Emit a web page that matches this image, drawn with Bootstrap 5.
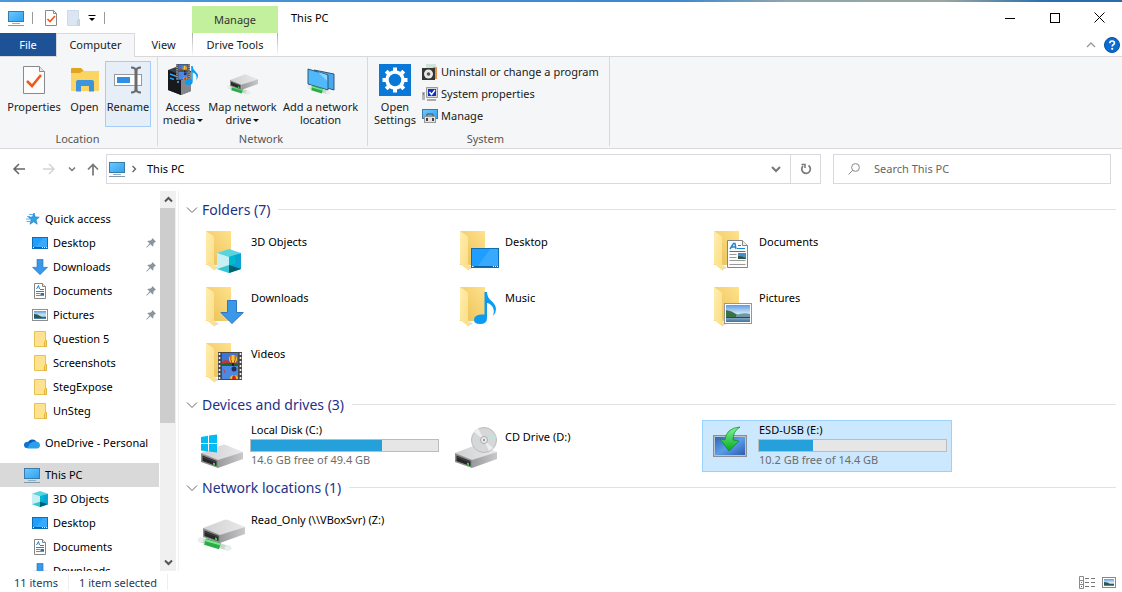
<!DOCTYPE html>
<html lang="en">
<head>
<meta charset="utf-8">
<meta name="viewport" content="width=device-width, initial-scale=1">
<title>This PC</title>
<link href="https://cdn.jsdelivr.net/npm/bootstrap@5.3.0/dist/css/bootstrap.min.css" rel="stylesheet">
<style>
:root{--line:#d9d9db;--ink:#1a1a1a}
body{font-family:"Noto Sans","Open Sans",sans-serif;font-size:11px;line-height:16px;color:#000;background:#fff}
svg{display:block;flex:none}
.btn{--bs-btn-font-size:11px;--bs-btn-line-height:16px;--bs-btn-border-radius:0;--bs-btn-border-width:0;--bs-btn-padding-x:0;--bs-btn-padding-y:0;--bs-btn-color:#000}
.desk-strip{height:2px;background:linear-gradient(90deg,#4a98dc,#3a88d0 60%,#8fa5ac 70%,#9aa79f 84%,#2c6fae 93%,#2a6cab)}
.title-row{height:31px}
.quick-bar{width:192px;padding:0 0 0 8px;gap:8px}
.quick-bar .sep{width:1px;height:12px;background:#999}
.quick-bar .sep-wide{margin-right:4px}
.ctx-head{width:86px;height:27px;background:#c3f09c;color:#333;line-height:28px}
.win-title{padding-left:13px}
.win-btn{width:45px}
.tab-row{height:24px;border-bottom:1px solid var(--line)}
.tab-row .nav-link{padding:0;line-height:24px;text-align:center;color:var(--ink);border-radius:0}
.tab-file{width:56px;height:23px;background:#1e5297;color:#fff!important}
.tab-computer{width:79px;height:24px;background:#f5f6f8;border:1px solid var(--line);border-bottom:0;line-height:22px!important}
.tab-view{width:57px}
.tab-drive{width:86px;border:solid;border-width:0 1px;border-image:linear-gradient(#aaa,#fff) 1}
.tab-tools{padding-right:2px}
.ribbon{background:#f5f6f8;border-bottom:1px solid var(--line);padding-bottom:2px}
.ribbon-group{padding:4px 5px 0 2px;border-right:1px solid var(--line)}
.ribbon-group:first-child{padding:4px 6px 0 4px}
.ribbon-group:last-child{padding:4px 10px 0 4px}
.group-name{color:#555;text-align:center;line-height:14px;margin-top:5px}
.big-btn{--bs-btn-border-width:1px;width:46px;height:66px;padding-top:2px;line-height:13px;display:flex;flex-direction:column;align-items:center;gap:4px;color:var(--ink);white-space:nowrap}
.big-btn.wide{width:73px}.big-btn.wider{width:83px}.big-btn.open{width:41px}.big-btn.prop{width:60px}
.big-btn.hot{background:#e6eef8;border-color:#a3ccf8}
.small-btn{height:22px;display:flex;align-items:center;gap:3px;color:var(--ink);white-space:nowrap}
.caret{display:inline-block;border:3px solid transparent;border-top-color:#111;border-bottom:0;vertical-align:2px;margin-left:2px}
.address-row{padding:5px 11px 7px 10px}
.nav-arrows{width:96px;gap:10px}
.field-box{height:30px;border:1px solid var(--line)}
.crumbs{padding-left:2px;gap:4px}
.reload-btn{width:30px;height:28px;border-left:1px solid var(--line)!important}
.search-box{width:278px;margin-left:12px;padding-left:14px;gap:14px}
.search-box input{border:0;padding:0;font-size:11px;line-height:16px;outline:0;background:none;min-height:0;color:#555}
.search-box input::placeholder{color:#666;opacity:1}
.side{width:159px;overflow:hidden;padding-top:16px}
.side .nav-link{height:24px;padding:0 3px 0 32px;gap:5px;color:#000;flex:none}
.side .nav-link.top{padding-left:24px}
.side .nav-link.current{background:#d9d9d9}
.side .gap-above{margin-top:8px}
.side .nav{flex-wrap:nowrap}
.scroll-track{width:16px;margin-left:1px;background:#f0f0f0}
.scroll-track button{height:17px}
.scroll-thumb{flex:0 0 59%;width:15px;background:#cdcdcd;max-height:215px}
.content-pane{margin-left:2px;border-left:1px solid #f0f0f0;padding:3px 6px 0 7px;overflow:hidden}
.section-head{height:31px;font-size:14px;line-height:18px;color:#1e3287;gap:4px}
.section-head::after{content:"";flex:1;height:1px;background:#e2e2e2;margin-left:4px}
.tile-grid{display:grid;grid-template-columns:repeat(auto-fill,250px);gap:4px;padding-left:8px}
.tile{height:52px;border:1px solid transparent;padding:1px 4px 0 3px;gap:4px;color:#000;text-decoration:none;text-align:left}
.tile.picked{background:#cce8ff;border-color:#99d1ff}
.tile-one{align-items:flex-start}
.tile-one .tile-name{margin-top:7px}
.tile-name{padding-left:1px}
.tile .progress{height:13px;margin-top:1px;--bs-progress-bg:#e6e6e6;--bs-progress-border-radius:0;--bs-progress-bar-bg:#26a0da;border:1px solid #bcbcbc}
.tile-free{color:#6d6d6d;padding-left:1px}
.status-bar{height:21px;color:#1e395b;padding:3px 6px 0 14px}
.status-bar .cell{padding:1px 10px 0 0;margin-right:10px;border-right:1px solid #eee;height:16px}
.view-btns{gap:7px}
</style>
</head>
<body>
<svg width="0" height="0" class="position-absolute" aria-hidden="true">
<defs>
<linearGradient id="gScreen" x1="0" y1="0" x2="1" y2="1"><stop offset="0" stop-color="#6cc9ff"/><stop offset="1" stop-color="#2fa0f0"/></linearGradient>
<linearGradient id="gFlap" x1="0" y1="0" x2="1" y2="1"><stop offset="0" stop-color="#ffeeb0"/><stop offset="1" stop-color="#fbdc80"/></linearGradient>
<linearGradient id="gBack" x1="0" y1="1" x2="1" y2="0"><stop offset="0" stop-color="#e9bf55"/><stop offset="1" stop-color="#ffe28c"/></linearGradient>
<linearGradient id="gTop" x1="0" y1="0" x2="1" y2="0"><stop offset="0" stop-color="#cfd0d3"/><stop offset="1" stop-color="#e9e9ea"/></linearGradient>
<linearGradient id="gSide" x1="0" y1="0" x2="1" y2="0"><stop offset="0" stop-color="#9a9a9c"/><stop offset="1" stop-color="#c9c9cb"/></linearGradient>
<linearGradient id="gSky" x1="0" y1="0" x2="0" y2="1"><stop offset="0" stop-color="#5e9be6"/><stop offset=".5" stop-color="#cfe6f5"/><stop offset="1" stop-color="#3d7199"/></linearGradient>
<linearGradient id="gUsb" x1="0" y1="0" x2="1" y2="1"><stop offset="0" stop-color="#2c62b8"/><stop offset=".5" stop-color="#5b9de8"/><stop offset="1" stop-color="#2a5ab0"/></linearGradient>
<linearGradient id="gLeaf" x1="0" y1="0" x2="0" y2="1"><stop offset="0" stop-color="#7df59a"/><stop offset="1" stop-color="#06a81c"/></linearGradient>
<symbol id="pc" viewBox="0 0 16 16"><rect x=".5" y="1.500" width="15" height="10" fill="url(#gScreen)" stroke="#3a7ca8"/><path d="M4 13h8v1H4z" fill="#8fb0c4"/><path d="M0 15h16v1H0z" fill="#7f9bb0"/></symbol>
<symbol id="desk" viewBox="0 0 28 20"><rect x=".5" y=".5" width="27" height="19" fill="#1e9fff" stroke="#0f6db4"/><path d="M19 1h8v17H7z" fill="#50b3ff" opacity=".5"/><path d="M1 18h26v1H1z" fill="#0b63a8"/><path d="M1 18h1.500v1H1zM22 18h1v1h-1zM24 18h1v1h-1zM26 18h1v1h-1z" fill="#fff"/></symbol>
<symbol id="desk16" viewBox="0 0 16 16"><rect x=".5" y="2.500" width="15" height="11" fill="#1e9fff" stroke="#0f6db4"/><path d="M11 3h4v9H4z" fill="#50b3ff" opacity=".5"/><path d="M1 12h14v1H1z" fill="#0b63a8"/><path d="M1 12h1v1H1zM10 12h1v1h-1zM12 12h1v1h-1zM14 12h1v1h-1z" fill="#fff"/></symbol>
<symbol id="down" viewBox="0 0 24 24"><path d="M7.500.5h9v12h6.800L12 23.500.8 12.500h6.700z" fill="#3b97e8" stroke="#2a78c4"/></symbol>
<symbol id="cube" viewBox="0 0 24 24"><path d="M0 4 12 0l12 4-12 5z" fill="#59d3e0"/><path d="M0 4l12 4v16L0 20z" fill="#c6f0f4"/><path d="M24 4 12 8v16l12-4z" fill="#09a3d5"/><path d="M12 8l6-2v8l-6 3z" fill="#00b9cf"/><path d="M0 20l12-4v8z" fill="#35c6d3"/><path d="M24 20l-12-4v8z" fill="#00616f"/></symbol>
<symbol id="doc" viewBox="0 0 21 28"><path d="M.5.5h15l5 5v22H.5z" fill="#fcfcfc" stroke="#858585"/><path d="M15.500.5v5h5" fill="#eee" stroke="#858585"/><path d="M3 9 6.500 3.500H8L9 9M4.500 7H8" fill="none" stroke="#1a86d0" stroke-width="1.400"/><path d="M11 5.500h3M10 8.500h8M2.500 11.500h16" stroke="#1a86d0" stroke-width="1.200"/><path d="M2.500 14.500h7M2.500 17.500h7M2.500 20.500h16M2.500 24.500h16" stroke="#9a9a9a"/><path d="M11 13h8v6h-8z" fill="#4d8ccb"/><path d="M11 16q4 0 8 2v1h-8z" fill="#2d5540"/></symbol>
<symbol id="doc16" viewBox="0 0 16 16"><path d="M2.500.5h8l3 3v12h-11z" fill="#fff" stroke="#868686"/><path d="M10.500.5v3h3" fill="#eee" stroke="#868686"/><path d="M4.500 6 6.500 2.500 7.500 6" fill="none" stroke="#1a86d0"/><path d="M8 6.500h4M4 8.500h8" stroke="#1a86d0"/><path d="M4 10.500h4M4 12.500h8" stroke="#888"/><path d="M8.500 10h3.500v2H8.500z" fill="#356f95"/></symbol>
<symbol id="pic" viewBox="0 0 28 21"><rect x=".5" y=".5" width="27" height="20" fill="#fff" stroke="#969696"/><path d="M2 2h24v17H2z" fill="url(#gSky)"/><path d="M2 7q6 1 10 4t7 3H2z" fill="#3c7046"/><path d="M12 12q8-3 14-1v3H12z" fill="#7198a0"/><path d="M2 14h24v1H2z" fill="#28485a"/></symbol>
<symbol id="pic16" viewBox="0 0 16 16"><rect x=".5" y="2.500" width="15" height="11" fill="#fff" stroke="#8e8e8e"/><path d="M2 4h12v8H2z" fill="url(#gSky)"/><path d="M2 7q4 0 6 2t6 1v1H2z" fill="#2a5950"/></symbol>
<symbol id="fold16" viewBox="0 0 16 16"><path d="M2.500.5h11v9h1v6h-12z" fill="#ffe28f" stroke="#e8c353"/><path d="M12.500 15.500v-5l1-1h1v6z" fill="#fbd767" stroke="#dfb53f"/></symbol>
<symbol id="star" viewBox="0 0 16 16"><path d="M10 2 11.200 6l4 .2-3.200 2.600 1.200 4.400-3.500-2.500-3.700 2.500 1.200-4.400L4.500 6.200 8.500 6z" fill="#2da2ea" stroke="#1f7fc2" stroke-width=".7"/><path d="M5 3.500h4M3 5.500h3M2 8h4M2.500 10.500h4" stroke="#57b6f0"/></symbol>
<symbol id="cloud" viewBox="0 0 16 16"><path d="M3.500 8a5 4.700 0 0 1 9-1.500L9 10z" fill="#0a5cb3"/><path d="M0 10.500a3.300 3.300 0 0 1 5-3.300l8.500 5.800H3a2.800 2.800 0 0 1-3-2.500z" fill="#1173cf"/><path d="M6 8.500q3-3 6.500-2 3.500.8 3.500 3.800T13 13.500H3z" fill="#2aa0ec"/></symbol>
<symbol id="pin" viewBox="0 0 11 11"><path d="M7 0 11 4 9.600 4.600 8.200 6.200 7.800 9.500 4.900 6.900 1 10.500 0 10.500 4 6 1.200 3.400 5 2.800 6.600 1.300z" fill="#89949c"/></symbol>
<symbol id="folder" viewBox="0 0 48 48"><path d="M8 4h25v34H8z" fill="url(#gBack)"/><path d="M16 43l5-2-4-3z" fill="#ddd"/><path d="M8 4l6 4q2 1 2 3v23l1 9q0 1-1 0l-8-6z" fill="url(#gFlap)"/></symbol>
<symbol id="drive" viewBox="0 0 44 24"><path d="M1 9 22 1q2-1 4 0l17 7-25 9z" fill="url(#gTop)"/><path d="M18 16l25-8v7L18 24z" fill="url(#gSide)"/><path d="M1 9l17 7v8L1 18z" fill="#8d8d8f"/><path d="M2.500 11.500 16.500 17v5L2.500 17z" fill="#272727"/><path d="M3 13l13 5" stroke="#555" stroke-width=".7"/><path d="M13 18.500l2 .8v2l-2-.8z" fill="#35e04a"/></symbol>
<symbol id="tube" viewBox="0 0 34 16"><path d="M3 5l3 1M23 11l6 2" stroke="#c9d6cd" stroke-width="5" stroke-linecap="round"/><path d="M2 5h1M29 13h2" stroke="#e8eeea" stroke-width="5" stroke-linecap="round"/><path d="M7 6.500 22 11" stroke="#29ad46" stroke-width="7"/><path d="M7 5 23 9.500" stroke="#7fe491" stroke-width="2"/></symbol>
<symbol id="film" viewBox="0 0 24 28"><path d="M0 0h24v28H0z" fill="#4a4a4a"/><path d="M4 1h16v12H4z" fill="#3e74d6"/><path d="M4 14h16v13H4z" fill="#4b8ae2"/><path d="M4 10q4-4 8 0t8-1v4H4z" fill="#c0382e"/><path d="M4 12q8-2 16 0v1H4z" fill="#1c6331"/><circle cx="15" cy="7" r="4" fill="#f0ca2a"/><path d="M13 3.500q-1 4 1 7.500M17 3.500q1 4-1 7.500" stroke="#d02a2a" fill="none"/><path d="M15 11v3" stroke="#222" stroke-width="2"/><circle cx="16" cy="17" r="2.500" fill="#2a2a55"/><path d="M12 27a4 4 0 0 1 8 0z" fill="#f0b629"/><path d="M14 27q0-3 2-4 2 1 2 4" fill="#c22"/><path d="M5 17q2 1 2 4" stroke="#c73a58" fill="none"/><path d="M1.500 1v26M22.500 1v26" stroke="#f0f0f0" stroke-width="1.600" stroke-dasharray="2 2"/></symbol>
<symbol id="note" viewBox="0 0 22 32"><path d="M10.500 0H13q0 5 4 8.500 5 4.500 5 8.500 0 4-3 7 2-6-1-10-2.500-3-5-3v15q0 6-7 6-6 0-6-4 0-5 7-5.500h3.500z" fill="#0c9bf3"/></symbol>
<symbol id="check" viewBox="0 0 22 28"><path d="M.5.5h16l5 5v22H.5z" fill="#fcfcfc" stroke="#8a8a8a"/><path d="M16.500.5v5h5" fill="#e6e6e6" stroke="#8a8a8a"/><path d="M4 15l5 5 9-11" fill="none" stroke="#f1581b" stroke-width="2.600"/></symbol>
<symbol id="chev" viewBox="0 0 12 12"><path d="M1 3.500 6 8.500l5-5" fill="none" stroke="currentColor"/></symbol>
</defs>
</svg>

<div class="d-flex flex-column vh-100 overflow-hidden">
<div class="desk-strip flex-shrink-0"></div>
<header class="flex-shrink-0">
  <div class="title-row d-flex">
    <div class="quick-bar d-flex align-items-center">
      <svg width="16" height="16"><use href="#pc"/></svg>
      <span class="sep sep-wide"></span>
      <button class="btn" aria-label="Properties"><svg width="12" height="16" viewBox="0 0 12 16"><path d="M.5.5h8l3 3v12H.5z" fill="#fff" stroke="#8a8a8a"/><path d="M8.500.5v3h3" fill="none" stroke="#8a8a8a"/><path d="M2.500 9 5 11.500 10 6" fill="none" stroke="#f1581b" stroke-width="1.700"/></svg></button>
      <button class="btn" aria-label="New folder"><svg width="15" height="16" viewBox="-2 0 15 16"><path d="M.5.5h11v9h1v6H.5z" fill="#dce6f3" stroke="#cddaea"/><path d="M10.500 15.500v-5l2-1v6z" fill="#d3dfee" stroke="#bfcfe3"/></svg></button>
      <button class="btn" aria-label="Customize toolbar"><svg width="8" height="8" viewBox="0 0 8 8"><path d="M.5 1.500h7" stroke="#000"/><path d="M1 4h6L4 7z"/></svg></button>
      <span class="sep"></span>
    </div>
    <div class="ctx-head align-self-end text-center">Manage</div>
    <div class="win-title flex-grow-1 align-self-center">This PC</div>
    <button class="btn win-btn d-flex align-items-center justify-content-center" aria-label="Minimize"><svg width="10" height="10"><path d="M0 5.500h10" stroke="#000"/></svg></button>
    <button class="btn win-btn d-flex align-items-center justify-content-center" aria-label="Maximize"><svg width="10" height="10"><rect x=".5" y=".5" width="9" height="9" fill="none" stroke="#000"/></svg></button>
    <button class="btn win-btn d-flex align-items-center justify-content-center" aria-label="Close"><svg width="11" height="11"><path d="M.5.5l10 10M10.500.5l-10 10" stroke="#000"/></svg></button>
  </div>
  <nav class="tab-row d-flex">
    <a href="#" class="nav-link tab-file">File</a>
    <a href="#" class="nav-link tab-computer">Computer</a>
    <a href="#" class="nav-link tab-view">View</a>
    <a href="#" class="nav-link tab-drive">Drive Tools</a>
    <div class="tab-tools ms-auto d-flex align-items-center gap-2">
      <button class="btn" aria-label="Collapse ribbon"><svg width="10" height="10" viewBox="0 0 10 10"><path d="M1 7l4-4 4 4" fill="none" stroke="#999" stroke-width="1.300"/></svg></button>
      <button class="btn" aria-label="Help"><svg width="16" height="16" viewBox="0 0 16 16"><circle cx="8" cy="8" r="7.500" fill="#0a6cd0" stroke="#0b4f9b"/><path d="M5.800 6.200q0-2.200 2.300-2.200t2.300 1.900q0 1.200-1.200 1.900-1 .6-1 1.700" fill="none" stroke="#fff" stroke-width="1.700"/><circle cx="8.200" cy="11.800" r="1.100" fill="#fff"/></svg></button>
    </div>
  </nav>
  <div class="ribbon d-flex">
    <section class="ribbon-group">
      <div class="d-flex">
        <button class="btn big-btn prop"><svg width="32" height="32" viewBox="0 0 32 32"><use href="#check" x="5" y="2" width="22" height="28"/></svg>Properties</button>
        <button class="btn big-btn open"><svg width="32" height="32" viewBox="0 0 32 32"><path d="M2 5q0-1 1-1h9l3 3h14q1 0 1 1v18H2z" fill="#e0a422"/><path d="M2 9h9l3-2h15q1 0 1 1v18q0 1-1 1H3q-1 0-1-1z" fill="#fcd462"/><path d="M7 27.500V18q0-2 2-2h14q2 0 2 2v9.500h-5V22h-8v5.500z" fill="#3b94dc"/></svg>Open</button>
        <button class="btn big-btn hot"><svg width="32" height="32" viewBox="0 0 32 32"><rect x="2.500" y="10.500" width="27" height="11" fill="#fff" stroke="#9a9a9a"/><path d="M5 13h13v6H5z" fill="#2d8fe5"/><path d="M19 3.500q5 0 5 4v17q0 4-5 4M29 3.500q-5 0-5 4v17q0 4 5 4" fill="none" stroke="#6b6b6b" stroke-width="2"/><path d="M24 6v20" stroke="#6b6b6b" stroke-width="3"/></svg>Rename</button>
      </div>
      <div class="group-name">Location</div>
    </section>
    <section class="ribbon-group">
      <div class="d-flex">
        <button class="btn big-btn"><svg width="32" height="32" viewBox="0 0 32 32"><path d="M1 6 9 3l15 4v20l-10 4L1 26z" fill="#3b3e42"/><path d="M14 12l10-4v19l-10 4z" fill="#85878b"/><path d="M1 6l13 5v20L1 26z" fill="#17191c"/><path d="M3 10l8 3M3 14l4 1.500" stroke="#2fa3f0" stroke-width="1.500"/><circle cx="11" cy="18" r="1" fill="#4db5ff"/><use href="#film" x="9" y="0" width="14" height="16"/><use href="#note" x="18" y="0" width="13" height="23"/></svg><span>Access<br>media<i class="caret"></i></span></button>
        <button class="btn big-btn wide"><svg width="32" height="32" viewBox="0 0 32 32"><use href="#tube" x="0" y="19" width="24" height="12"/><use href="#drive" x="2" y="10" width="30" height="16"/></svg><span>Map network<br>drive<i class="caret"></i></span></button>
        <button class="btn big-btn wider"><svg width="32" height="32" viewBox="0 0 32 32"><path d="M9 6l20 4v16L9 20z" fill="#49a9ef" stroke="#31587a"/><path d="M3 5l20 6v15L3 20z" fill="#50b9fb" stroke="#31587a"/><path d="M13 8l9 3v6z" fill="#8ad4ff"/><use href="#tube" x="2" y="19" width="24" height="12"/></svg><span>Add a network<br>location</span></button>
      </div>
      <div class="group-name">Network</div>
    </section>
    <section class="ribbon-group">
      <div class="d-flex">
        <button class="btn big-btn"><svg width="32" height="32" viewBox="0 0 32 32"><path d="M0 0h32v32H0z" fill="#0a78d7"/><circle cx="16" cy="16" r="8" fill="none" stroke="#fff" stroke-width="3.500"/><g stroke="#fff" stroke-width="4"><path d="M16 3.500v4M16 24.500v4M3.500 16h4M24.500 16h4M7.200 7.200l2.800 2.800M22 22l2.800 2.800M7.200 24.800 10 22M22 10l2.800-2.800"/></g></svg><span>Open<br>Settings</span></button>
        <div class="ps-1">
          <button class="btn small-btn"><svg width="16" height="16" viewBox="0 0 16 16"><path d="M4 0h10v6H4z" fill="#cfe3d9"/><path d="M11 3h4v12h-4z" fill="#e8954b"/><path d="M0 4h13v12H0z" fill="#353535"/><circle cx="6.500" cy="10" r="4.500" fill="#e9e9e9"/><circle cx="6.500" cy="10" r="1.800" fill="#555"/></svg>Uninstall or change a program</button>
          <button class="btn small-btn"><svg width="16" height="16" viewBox="0 0 16 16"><path d="M4.500 1.500h11v10h-11z" fill="#d8d8d8" stroke="#999"/><path d="M6 3h8v7H6z" fill="#1230c0"/><path d="M7.500 6 9.500 8.500 13 4" fill="none" stroke="#fff" stroke-width="1.400"/><path d="M0 6h3v8H0z" fill="#b5b5b5"/><path d="M1 7h1v2H1z" fill="#27b32e"/><path d="M5 13h9v2H5z" fill="#aaa"/></svg>System properties</button>
          <button class="btn small-btn"><svg width="16" height="16" viewBox="0 0 16 16"><rect x=".5" y="1.500" width="15" height="9" fill="url(#gScreen)" stroke="#3a7ca8"/><path d="M5 8V6h6v2" fill="none" stroke="#555"/><rect x="2.500" y="8.500" width="11" height="6" fill="#e3e3e3" stroke="#999"/><path d="M4 10h2v3H4zM10 10h2v3h-2z" fill="#444"/></svg>Manage</button>
        </div>
      </div>
      <div class="group-name">System</div>
    </section>
  </div>
</header>

<div class="address-row d-flex align-items-center flex-shrink-0">
  <div class="nav-arrows d-flex align-items-center flex-shrink-0">
    <button class="btn" aria-label="Back"><svg width="18" height="14" viewBox="0 0 18 14"><path d="M15 7H4M9 2 4 7l5 5" fill="none" stroke="#666" stroke-width="1.500"/></svg></button>
    <button class="btn" aria-label="Forward"><svg width="20" height="14" viewBox="0 0 20 14"><path d="M5 7h11M11 2l5 5-5 5" fill="none" stroke="#d4d4d4" stroke-width="1.500"/></svg></button>
    <button class="btn" aria-label="Recent"><svg width="8" height="8" viewBox="0 0 8 8"><path d="M1 2.500l3 3 3-3" fill="none" stroke="#777" stroke-width="1.500"/></svg></button>
    <button class="btn" aria-label="Up"><svg width="14" height="14" viewBox="0 0 14 14"><path d="M7 13.500V3M2 7.500l5-5 5 5" fill="none" stroke="#777" stroke-width="1.700"/></svg></button>
  </div>
  <div class="field-box crumbs d-flex align-items-center flex-grow-1">
    <svg width="16" height="16"><use href="#pc"/></svg>
    <svg width="10" height="10" viewBox="0 0 10 10"><path d="M3.500 2 6.500 5l-3 3" fill="none" stroke="#666" stroke-width="1.400"/></svg>
    <span class="ps-1 flex-grow-1">This PC</span>
    <button class="btn me-1" aria-label="Previous locations"><svg width="12" height="10" viewBox="0 0 12 10"><path d="M2 3l4 4 4-4" fill="none" stroke="#777" stroke-width="2"/></svg></button>
    <button class="btn reload-btn d-flex align-items-center justify-content-center" aria-label="Refresh"><svg width="12" height="12" viewBox="0 0 12 12"><path d="M8.500 2.500A4.300 4.300 0 1 1 3 3" fill="none" stroke="#777" stroke-width="1.700"/><path d="M1.500 1.500H5V5" fill="none" stroke="#777" stroke-width="1.500"/></svg></button>
  </div>
  <label class="field-box search-box d-flex align-items-center flex-shrink-0">
    <svg width="12" height="12" viewBox="0 0 12 12"><circle cx="7.500" cy="4.500" r="3.900" fill="none" stroke="#888"/><path d="M4.700 7.300.5 11.500" stroke="#888"/></svg>
    <input class="form-control" type="text" placeholder="Search This PC" aria-label="Search This PC">
  </label>
</div>

<div class="d-flex flex-grow-1 overflow-hidden">
  <aside class="side flex-shrink-0">
    <nav class="nav flex-column">
      <a href="#" class="nav-link top d-flex align-items-center"><svg width="16" height="16"><use href="#star"/></svg>Quick access</a>
      <a href="#" class="nav-link d-flex align-items-center"><svg width="16" height="16"><use href="#desk16"/></svg>Desktop<svg class="ms-auto" width="10" height="10"><use href="#pin"/></svg></a>
      <a href="#" class="nav-link d-flex align-items-center"><svg width="16" height="16"><use href="#down"/></svg>Downloads<svg class="ms-auto" width="10" height="10"><use href="#pin"/></svg></a>
      <a href="#" class="nav-link d-flex align-items-center"><svg width="16" height="16"><use href="#doc16"/></svg>Documents<svg class="ms-auto" width="10" height="10"><use href="#pin"/></svg></a>
      <a href="#" class="nav-link d-flex align-items-center"><svg width="16" height="16"><use href="#pic16"/></svg>Pictures<svg class="ms-auto" width="10" height="10"><use href="#pin"/></svg></a>
      <a href="#" class="nav-link d-flex align-items-center"><svg width="16" height="16"><use href="#fold16"/></svg>Question 5</a>
      <a href="#" class="nav-link d-flex align-items-center"><svg width="16" height="16"><use href="#fold16"/></svg>Screenshots</a>
      <a href="#" class="nav-link d-flex align-items-center"><svg width="16" height="16"><use href="#fold16"/></svg>StegExpose</a>
      <a href="#" class="nav-link d-flex align-items-center"><svg width="16" height="16"><use href="#fold16"/></svg>UnSteg</a>
      <a href="#" class="nav-link top gap-above d-flex align-items-center text-nowrap"><svg width="16" height="16"><use href="#cloud"/></svg>OneDrive - Personal</a>
      <a href="#" class="nav-link top gap-above current d-flex align-items-center"><svg width="16" height="16"><use href="#pc"/></svg>This PC</a>
      <a href="#" class="nav-link d-flex align-items-center"><svg width="16" height="16"><use href="#cube"/></svg>3D Objects</a>
      <a href="#" class="nav-link d-flex align-items-center"><svg width="16" height="16"><use href="#desk16"/></svg>Desktop</a>
      <a href="#" class="nav-link d-flex align-items-center"><svg width="16" height="16"><use href="#doc16"/></svg>Documents</a>
      <a href="#" class="nav-link d-flex align-items-center"><svg width="16" height="16"><use href="#down"/></svg>Downloads</a>
    </nav>
  </aside>
  <div class="scroll-track d-flex flex-column flex-shrink-0">
    <button class="btn d-flex align-items-center justify-content-center" aria-label="Scroll up"><svg width="9" height="9" viewBox="0 0 9 9"><path d="M1 6.500l3.500-3.500L8 6.500" fill="none" stroke="#555" stroke-width="2"/></svg></button>
    <div class="scroll-thumb"></div>
    <button class="btn d-flex align-items-center justify-content-center mt-auto" aria-label="Scroll down"><svg width="9" height="9" viewBox="0 0 9 9"><path d="M1 2.500 4.500 6 8 2.500" fill="none" stroke="#555" stroke-width="2"/></svg></button>
  </div>
  <main class="content-pane flex-grow-1">
    <h2 class="section-head d-flex align-items-center m-0 fw-normal"><svg width="12" height="12" color="#666"><use href="#chev"/></svg>Folders (7)</h2>
    <div class="tile-grid">
      <a href="#" class="tile tile-one d-flex"><svg width="48" height="48" viewBox="0 0 48 48"><use href="#folder"/><use href="#cube" x="19" y="22" width="24" height="24"/></svg><span class="tile-name">3D Objects</span></a>
      <a href="#" class="tile tile-one d-flex"><svg width="48" height="48" viewBox="0 0 48 48"><use href="#folder"/><use href="#desk" x="19" y="21" width="28" height="20"/></svg><span class="tile-name">Desktop</span></a>
      <a href="#" class="tile tile-one d-flex"><svg width="48" height="48" viewBox="0 0 48 48"><use href="#folder"/><use href="#doc" x="21" y="13" width="21" height="28"/></svg><span class="tile-name">Documents</span></a>
      <a href="#" class="tile tile-one d-flex"><svg width="48" height="48" viewBox="0 0 48 48"><use href="#folder"/><use href="#down" x="22" y="17" width="24" height="24"/></svg><span class="tile-name">Downloads</span></a>
      <a href="#" class="tile tile-one d-flex"><svg width="48" height="48" viewBox="0 0 48 48"><use href="#folder"/><use href="#note" x="22" y="9" width="22" height="32"/></svg><span class="tile-name">Music</span></a>
      <a href="#" class="tile tile-one d-flex"><svg width="48" height="48" viewBox="0 0 48 48"><use href="#folder"/><use href="#pic" x="18" y="20" width="28" height="21"/></svg><span class="tile-name">Pictures</span></a>
      <a href="#" class="tile tile-one d-flex"><svg width="48" height="48" viewBox="0 0 48 48"><use href="#folder"/><use href="#film" x="20" y="13" width="24" height="28"/></svg><span class="tile-name">Videos</span></a>
    </div>
    <h2 class="section-head d-flex align-items-center m-0 fw-normal"><svg width="12" height="12" color="#666"><use href="#chev"/></svg>Devices and drives (3)</h2>
    <div class="tile-grid">
      <a href="#" class="tile d-flex"><svg width="48" height="48" viewBox="0 0 48 48"><use href="#drive" x="2" y="22" width="44" height="24"/><path d="M3 15l7-1.200V21H3zM11 13.600 19 12.500V21h-8zM3 22h7v7.500l-7-1zM11 22h8v8.500l-8-1z" fill="#00bcf2"/></svg>
        <div class="flex-grow-1"><div class="tile-name">Local Disk (C:)</div><div class="progress"><div class="progress-bar" style="width:70%"></div></div><div class="tile-free">14.6 GB free of 49.4 GB</div></div></a>
      <a href="#" class="tile tile-one d-flex"><svg width="48" height="48" viewBox="0 0 48 48"><use href="#drive" x="2" y="22" width="44" height="24"/><circle cx="32" cy="18" r="12.500" fill="#d5d7d9" stroke="#bbb"/><path d="M32 18 22 10l4-4zM32 18l9 8-4 3z" fill="#eee"/><path d="M32 18l11-6 1 4z" fill="#bfe5d6"/><circle cx="32" cy="18" r="3.500" fill="#eee" stroke="#aaa"/><circle cx="32" cy="18" r="1.200" fill="#999"/></svg><span class="tile-name">CD Drive (D:)</span></a>
      <a href="#" class="tile picked d-flex"><svg width="48" height="48" viewBox="0 0 48 48"><path d="M7 13h34v22H7z" fill="#8b8f93"/><path d="M8.500 14.500h31v19h-31z" fill="url(#gUsb)" stroke="#b9c4cc"/><path d="M34 5Q20 6 19 18l-5-1 9 12 10-10-6-1Q27 9 34 5z" fill="url(#gLeaf)" stroke="#0c8a20" stroke-width=".7"/></svg>
        <div class="flex-grow-1"><div class="tile-name">ESD-USB (E:)</div><div class="progress"><div class="progress-bar" style="width:29%"></div></div><div class="tile-free">10.2 GB free of 14.4 GB</div></div></a>
    </div>
    <h2 class="section-head d-flex align-items-center m-0 fw-normal"><svg width="12" height="12" color="#666"><use href="#chev"/></svg>Network locations (1)</h2>
    <div class="tile-grid">
      <a href="#" class="tile tile-one d-flex"><svg width="48" height="48" viewBox="0 0 48 48"><use href="#tube" x="0" y="30" width="34" height="16"/><use href="#drive" x="4" y="14" width="44" height="24"/></svg><span class="tile-name">Read_Only (\\VBoxSvr) (Z:)</span></a>
    </div>
  </main>
</div>

<footer class="status-bar d-flex flex-shrink-0">
  <span class="cell">11 items</span><span class="cell">1 item selected</span>
  <div class="view-btns ms-auto d-flex">
    <button class="btn" aria-label="Details view"><svg width="16" height="14" viewBox="0 0 16 14"><path d="M.5.5h4v12h-4zM.5 4.500h4M.5 8.500h4" fill="none" stroke="#8a8a8a"/><path d="M6 2.500h4M12 2.500h4M6 6.500h4M12 6.500h4M6 10.500h4M12 10.500h4" stroke="#777"/><path d="M2 6h1v1H2z" fill="#2a9de0"/><path d="M2 10h1v1H2z" fill="#d22"/></svg></button>
    <button class="btn" aria-label="Large icons view"><svg width="14" height="14" viewBox="0 0 14 14"><rect x=".5" y="1.500" width="13" height="10" fill="#fff" stroke="#888"/><path d="M2 3h10v7H2z" fill="url(#gSky)"/><path d="M2 6q4 0 6 2h4v1H2z" fill="#2a5950"/></svg></button>
  </div>
</footer>
</div>
<script src="https://cdn.jsdelivr.net/npm/bootstrap@5.3.0/dist/js/bootstrap.bundle.min.js"></script>
</body>
</html>
